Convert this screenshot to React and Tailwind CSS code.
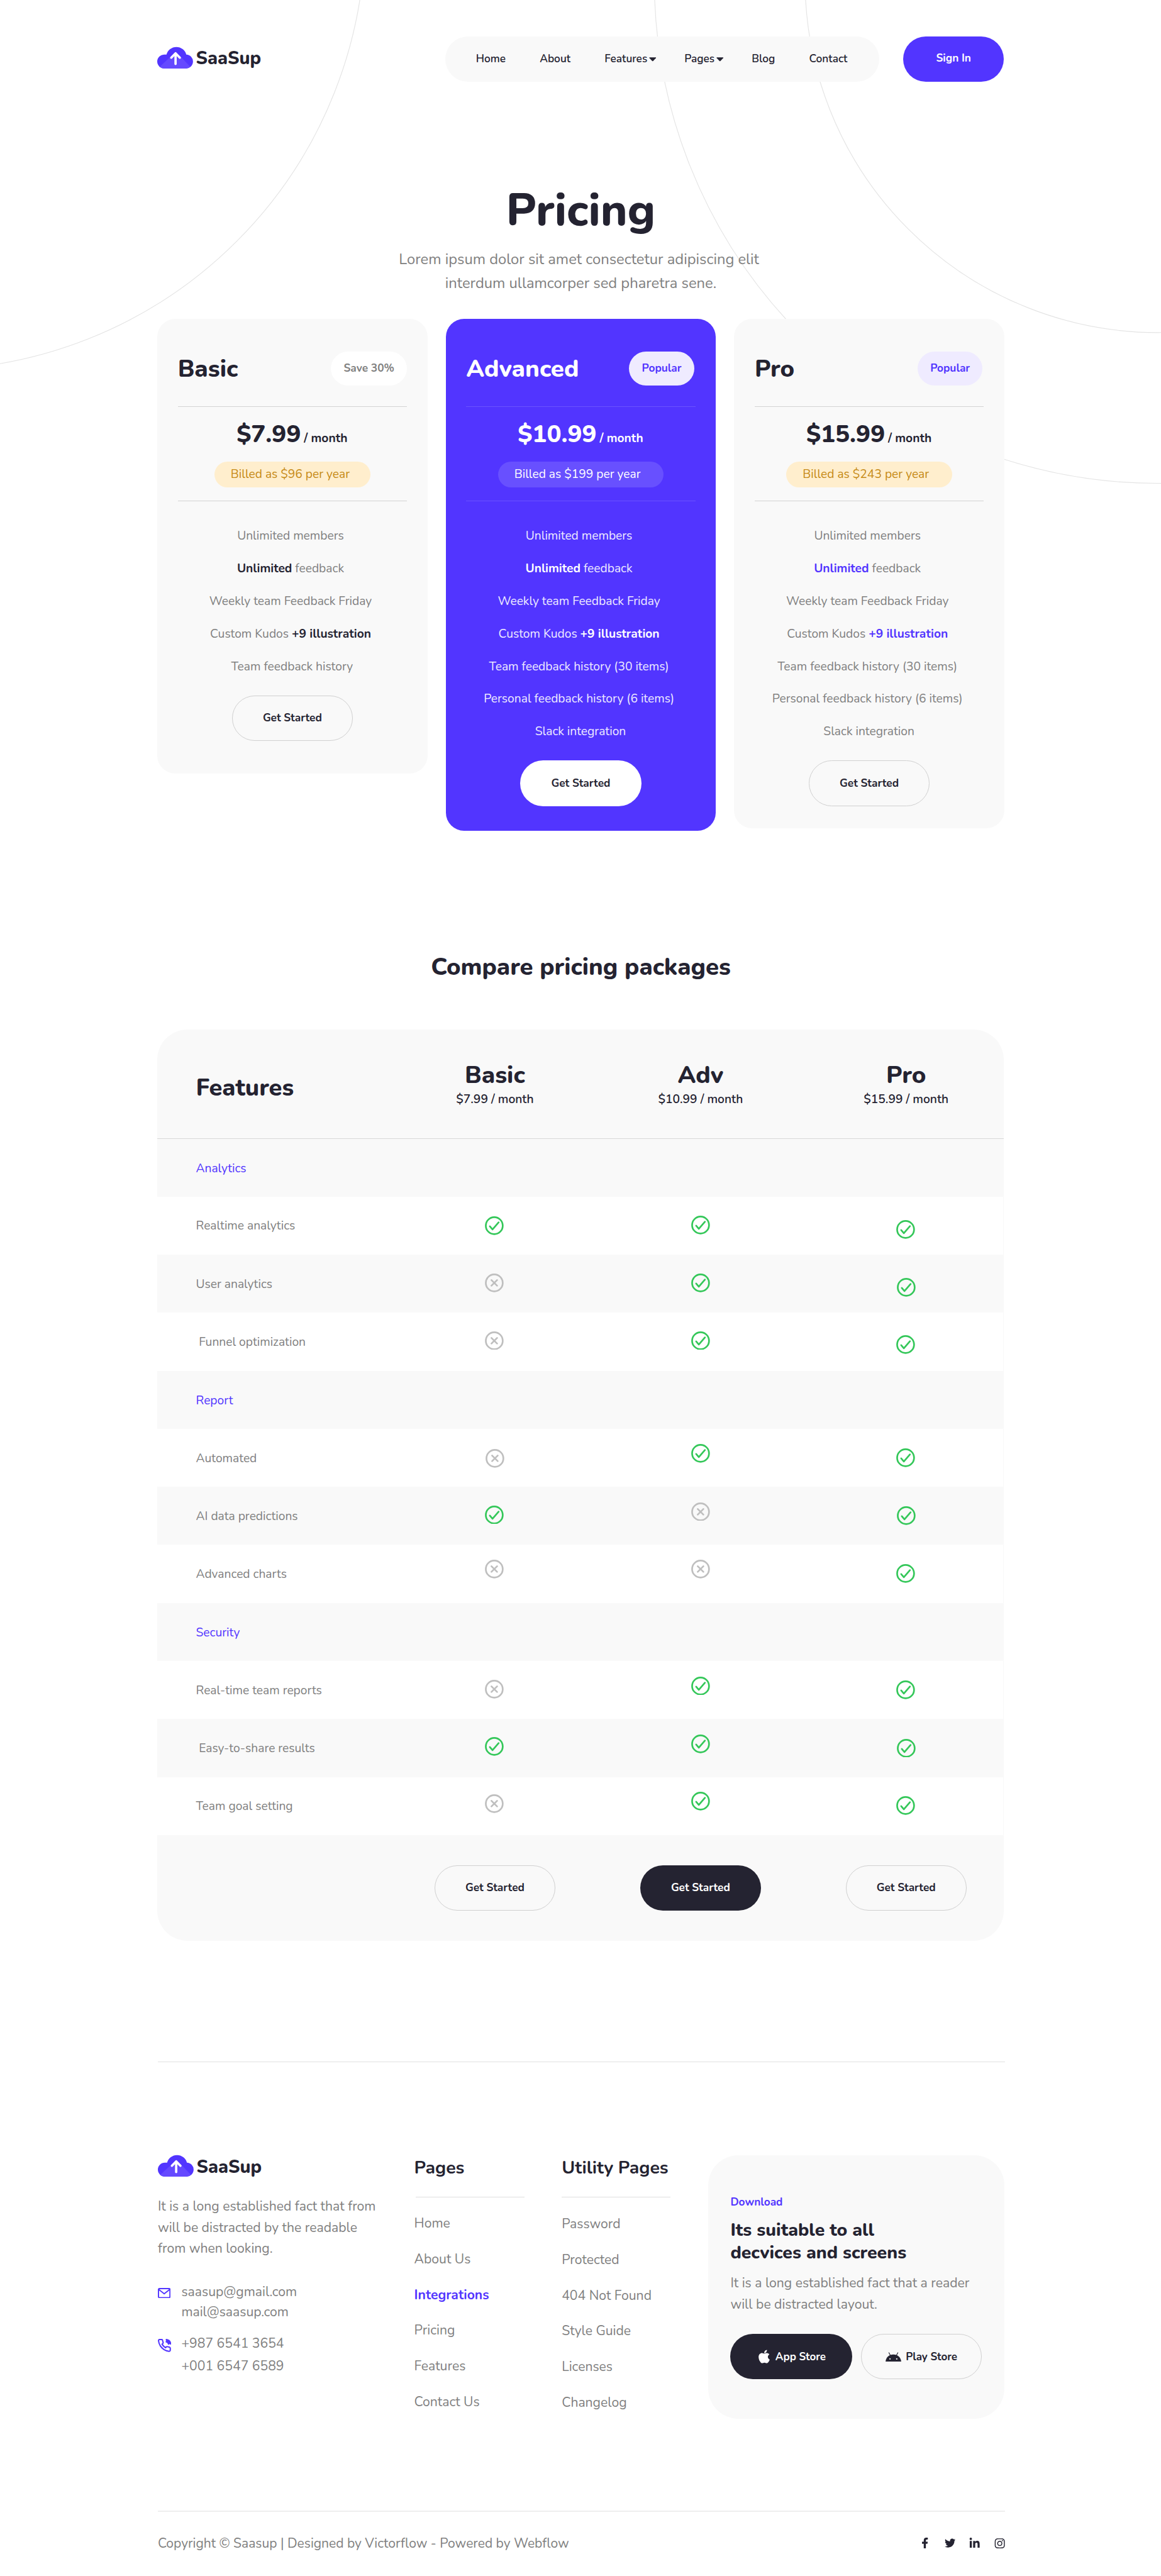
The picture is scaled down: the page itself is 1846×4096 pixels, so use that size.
import React from "react";
import { FaApple, FaFacebookF, FaInstagram, FaLinkedinIn, FaTwitter } from "react-icons/fa";

function Arcs() {
  return (
    <svg className="pointer-events-none absolute left-0 top-0" width="1920" height="810" viewBox="0 0 1920 810" fill="none" stroke="#e4e4e4" strokeWidth="1.2" aria-hidden="true">
      <circle cx="-121.6" cy="-114" r="725.6" />
      <circle cx="1915" cy="-33.7" r="583.7" />
      <circle cx="1915" cy="-33.7" r="833" />
    </svg>
  );
}

function Logo() {
  return (
    <div className="flex h-9 items-center gap-[5px]">
      <svg width="59" height="36.3" viewBox="0 0 59 36.3" fill="none">
        <path d="M11.5 36.3A11.5 11.5 0 0 1 11.5 13.3H15.3A17 17 0 0 1 48.1 13.3A11.5 11.5 0 0 1 47.2 36.3Z" fill="#5235ff" />
        <path d="M31 8.5L54.6 33.2Q51.6 36.3 47.2 36.3H11.5Q7 36.3 4 33.4Z" fill="#6549ff" />
        <path d="M30.3 28.8V11.4M23.2 18.4L30.3 11.2L37.4 18.4" stroke="#fff" strokeWidth="3.8" strokeLinecap="round" strokeLinejoin="round" />
      </svg>
      <span className="pt-[5px] text-[30px] leading-9 font-extrabold text-[#242331]">SaaSup</span>
    </div>
  );
}

function Caret() {
  return (
    <svg width="12" height="7" viewBox="0 0 12 7" fill="#242331">
      <path d="M1 .3H11Q12 .4 11.4 1.2L6.8 6.2Q6 7 5.2 6.2L.6 1.2Q0 .4 1 .3Z" />
    </svg>
  );
}

const navItems = [
  { label: "Home" },
  { label: "About" },
  { label: "Features", menu: true },
  { label: "Pages", menu: true },
  { label: "Blog" },
  { label: "Contact" },
];

function Header() {
  return (
    <header className="flex h-[135px] items-start pt-[60px]">
      <div className="w-[476px] pt-[17px]">
        <Logo />
      </div>
      <nav className="flex h-[75px] w-[718px] items-center gap-[56.4px] rounded-full bg-[#f9f9f9] pt-[2px] pl-[51px]">
        {navItems.map((item) => (
          <a key={item.label} className={item.menu ? "-mr-[10px] flex items-center gap-[3px] text-lg font-semibold" : "text-lg font-semibold"}>
            {item.label}
            {item.menu && <Caret />}
          </a>
        ))}
      </nav>
      <a className="ml-10 flex h-[75px] w-[166px] items-center justify-center rounded-full bg-[#5235ff] text-lg font-bold text-white">Sign In</a>
    </header>
  );
}

const plans = [
  {
    name: "Basic",
    badge: "Save 30%",
    price: "$7.99",
    billed: "Billed as $96 per year",
    card: "h-[752px] bg-[#f9f9f9]",
    badgeStyle: "bg-white text-[#808080]",
    rule: "border-[#d3d3d3]",
    pill: "w-[258px] bg-[#ffeecd] text-[#c68a15]",
    item: "text-[#808080]",
    strong: "text-[#242331]",
    button: "border border-[#d0d0d0]",
    tail: ["Team feedback history"],
  },
  {
    name: "Advanced",
    badge: "Popular",
    price: "$10.99",
    billed: "Billed as $199 per year",
    card: "h-[847px] bg-[#5235ff] text-white",
    badgeStyle: "mr-[2px] bg-[#efebff] text-[#5235ff]",
    rule: "border-[#6a52ff]",
    pill: "w-[274px] bg-[#6850ff] text-white",
    item: "text-white/90",
    strong: "text-white",
    button: "bg-white text-[#242331]",
    tail: ["Team feedback history (30 items)", "Personal feedback history (6 items)", "Slack integration"],
  },
  {
    name: "Pro",
    badge: "Popular",
    price: "$15.99",
    billed: "Billed as $243 per year",
    card: "h-[843px] bg-[#f9f9f9]",
    badgeStyle: "mr-[2px] bg-[#efebff] text-[#5235ff]",
    rule: "border-[#d3d3d3]",
    pill: "w-[274px] bg-[#ffeecd] text-[#c68a15]",
    item: "text-[#808080]",
    strong: "text-[#5235ff]",
    button: "border border-[#d0d0d0]",
    tail: ["Team feedback history (30 items)", "Personal feedback history (6 items)", "Slack integration"],
  },
];

function PlanCard({ plan }) {
  const tail = plan.tail;
  return (
    <article className={`flex w-[447px] flex-col items-center rounded-[30px] px-[34px] pt-[54px] ${plan.card}`}>
      <div className="mb-[34px] flex h-[57px] w-full items-center justify-between">
        <h2 className="pt-[2px] text-[40px] leading-none font-extrabold">{plan.name}</h2>
        <span className={`flex h-[57px] items-center rounded-full px-[21px] pt-px text-lg font-bold ${plan.badgeStyle}`}>{plan.badge}</span>
      </div>
      <div className={`flex h-[157px] w-full flex-col items-center border-y pt-[15px] ${plan.rule}`}>
        <p className="pr-px text-[40px] leading-[60px] font-extrabold">
          {plan.price}
          <span className="ml-[5px] text-xl leading-none font-bold">/ month</span>
        </p>
        <span className={`mt-[15px] flex h-[43px] items-center rounded-full pt-px pl-[27px] text-xl ${plan.pill}`}>{plan.billed}</span>
      </div>
      <ul className={`mt-[31px] text-center text-xl leading-[54px] ${plan.item}`}>
        <li className="pr-1.5">Unlimited members</li>
        <li className="pr-1.5"><strong className={plan.strong}>Unlimited</strong> feedback</li>
        <li className="pr-1.5">Weekly team Feedback Friday</li>
        <li className="pr-1.5">Custom Kudos <strong className={plan.strong}>+9 illustration</strong></li>
        {tail.map((t, i) => (
          <li key={t} className={i === tail.length - 1 ? "pr-px" : "pr-1.5"}>{t}</li>
        ))}
      </ul>
      <a className={`mt-[20px] flex h-[75px] w-[200px] items-center justify-center rounded-full pt-px text-lg font-bold ${plan.button}`}>Get Started</a>
    </article>
  );
}

function Mark({ on }) {
  return (
    <svg width="31" height="31" viewBox="-15.5 -15.5 31 31" fill="none" stroke={on ? "#34c759" : "#bfbfbf"} strokeWidth="2.8" strokeLinecap="round" strokeLinejoin="round">
      <circle r="14" />
      <path d={on ? "M-7.3 1L-2.9 6.2L7.2 -5.5" : "M-4.7 -4.7L4.7 4.7M4.7 -4.7L-4.7 4.7"} />
    </svg>
  );
}

// Vertical shift of a mark from the middle of its row, in pixels.
const nudge = {
  "-8": "pb-[16px]",
  "-7": "pb-[14px]",
  "-4": "pb-[8px]",
  "-3": "pb-[6px]",
  "-2": "pb-[4px]",
  "-1": "pb-[2px]",
  0: "",
  1: "pt-[2px] pl-[2px]",
  5: "pt-[10px]",
  6: "pt-[12px]",
};

const rows = [
  { group: "Analytics" },
  { label: "Realtime analytics", marks: [[1, 0], [1, -1], [1, 6]] },
  { label: "User analytics", marks: [[0, -1], [1, -1], [1, 6]] },
  { label: "Funnel optimization", wide: true, marks: [[0, -2], [1, -2], [1, 5]] },
  { group: "Report" },
  { label: "Automated", marks: [[0, 1], [1, -7], [1, 0]] },
  { label: "AI data predictions", marks: [[1, -2], [0, -7], [1, 0]] },
  { label: "Advanced charts", marks: [[0, -8], [0, -8], [1, -1]] },
  { group: "Security" },
  { label: "Real-time team reports", marks: [[0, -1], [1, -7], [1, 0]] },
  { label: "Easy-to-share results", wide: true, marks: [[1, -3], [1, -7], [1, 0]] },
  { label: "Team goal setting", marks: [[0, -4], [1, -8], [1, -1]] },
];

const cols = "grid grid-cols-[389px_340px_340px_1fr]";

function Compare() {
  return (
    <section className="w-[1400px]">
      <div className={`${cols} h-[181px] rounded-t-[50px] border-b border-[#d8d8d8] bg-[#f9f9f9]`}>
        <h3 className="flex items-center pt-[12px] pl-16 text-[39.5px] leading-none font-extrabold">Features</h3>
        {[["Basic", "$7.99 / month"], ["Adv", "$10.99 / month"], ["Pro", "$15.99 / month"]].map(([name, price], i) => (
          <div key={name} className={i === 2 ? "pt-[54px] pl-[8px] text-center" : "-ml-px pt-[54px] text-center"}>
            <h3 className="text-[40px] leading-[44px] font-extrabold">{name}</h3>
            <p className="mt-[5px] text-xl leading-[27px] font-semibold">{price}</p>
          </div>
        ))}
      </div>
      {rows.map((row, r) => (
        <div key={r} className={`${cols} items-center text-xl ${r === 0 ? "h-[95px]" : "h-24"} ${r % 2 ? "border-r border-[#f9f9f9] bg-white" : "bg-[#f9f9f9]"}`}>
          {row.group ? (
            <span className="pt-[3px] pl-16 text-[#5235ff]">{row.group}</span>
          ) : (
            <>
              <span className={row.wide ? "pt-[2px] pl-[69px] text-[#808080]" : "pt-[2px] pl-16 text-[#808080]"}>{row.label}</span>
              {row.marks.map(([on, dy], i) => (
                <span key={i} className={`flex justify-center ${i === 0 ? "-ml-[3px]" : i === 2 ? "ml-[8px]" : "-ml-px"} ${nudge[dy]}`}>
                  <Mark on={on === 1} />
                </span>
              ))}
            </>
          )}
        </div>
      ))}
      <div className={`${cols} h-[175px] rounded-b-[50px] bg-[#f9f9f9] pt-[50px]`}>
        <span />
        {["border border-[#d0d0d0]", "bg-[#242331] text-white", "border border-[#d0d0d0]"].map((b, i) => (
          <div key={i} className={i === 2 ? "flex justify-center pl-[8px]" : "-ml-px flex justify-center"}>
            <a className={`flex h-[75px] w-[200px] items-center justify-center rounded-full pt-px text-lg font-bold ${b}`}>Get Started</a>
          </div>
        ))}
      </div>
    </section>
  );
}

function MailIcon() {
  return (
    <svg className="mt-[11px] shrink-0" width="21" height="17" viewBox="0 0 21 17" fill="none" stroke="#5235ff" strokeWidth="2" strokeLinejoin="round">
      <rect x="1" y="1" width="19" height="15" rx="1.6" />
      <path d="M1.6 2.6L10.5 9.6L19.4 2.6" />
    </svg>
  );
}

function PhoneIcon() {
  return (
    <svg className="mt-[10px] shrink-0" width="22" height="22" viewBox="1 1 22.5 22.5" fill="none" stroke="#5235ff" strokeWidth="2.2" strokeLinecap="round" strokeLinejoin="round">
      <path d="M22 16.92v3a2 2 0 0 1-2.18 2 19.79 19.79 0 0 1-8.63-3.07 19.5 19.5 0 0 1-6-6 19.79 19.79 0 0 1-3.07-8.67A2 2 0 0 1 4.11 2h3a2 2 0 0 1 2 1.72 12.84 12.84 0 0 0 .7 2.81 2 2 0 0 1-.45 2.11L8.09 9.91a16 16 0 0 0 6 6l1.27-1.27a2 2 0 0 1 2.11-.45 12.84 12.84 0 0 0 2.81.7A2 2 0 0 1 22 16.92z" />
      <path d="M15.6 2.4C19.4 3 21.8 5.4 22.4 9.2M15.4 5.8C17.6 6.2 18.8 7.4 19.2 9.4M16 3.4L20.4 8.2" strokeWidth="2.8" />
    </svg>
  );
}

function AndroidIcon() {
  return (
    <svg width="26" height="16" viewBox="0 0 26 16" fill="none">
      <path d="M0 16C.7 8.6 6 4 13 4S25.3 8.6 26 16Z" fill="#242331" />
      <path d="M5.6 1L8.2 5.8M20.4 1L17.8 5.8" stroke="#242331" strokeWidth="1.2" strokeLinecap="round" />
      <circle cx="7.4" cy="11.3" r="1.2" fill="#f9f9f9" />
      <circle cx="18.6" cy="11.3" r="1.2" fill="#f9f9f9" />
    </svg>
  );
}

function LinkColumn({ title, links, active, width, ruleStyle, listStyle }) {
  return (
    <div className={width}>
      <h4 className="h-10 text-[29.6px] leading-[41px] font-bold">{title}</h4>
      <div className={`mt-[29px] h-px w-[180px] bg-[#dedede] ${ruleStyle}`} />
      <ul className={`text-[22px] leading-[59px] text-[#808080] ${listStyle}`}>
        {links.map((l) => (
          <li key={l} className={l === active ? "font-bold text-[#5235ff]" : ""}>{l}</li>
        ))}
      </ul>
    </div>
  );
}

function Footer() {
  return (
    <footer className="ml-px w-[1401px]">
      <div className="mt-[199px] h-px bg-[#e2e2e2]" />
      <div className="flex h-[742px] items-start pt-[154px]">
        <div className="w-[424px] text-[22px] text-[#808080]">
          <Logo />
          <p className="mt-[32px] w-[366px] leading-[35px]">It is a long established fact that from will be distracted by the readable from when looking.</p>
          <div className="mt-[36px] flex gap-[18px] leading-[33.5px]">
            <MailIcon />
            <p>saasup@gmail.com<br />mail@saasup.com</p>
          </div>
          <div className="mt-[18px] flex gap-[17px] leading-[37px]">
            <PhoneIcon />
            <p>+987 6541 3654<br />+001 6547 6589</p>
          </div>
        </div>
        <LinkColumn
          title="Pages"
          links={["Home", "About Us", "Integrations", "Pricing", "Features", "Contact Us"]}
          active="Integrations"
          width="w-[244px]"
          ruleStyle="ml-[2px]"
          listStyle="mt-[14px]"
        />
        <LinkColumn
          title="Utility Pages"
          links={["Password", "Protected", "404 Not Found", "Style Guide", "Licenses", "Changelog"]}
          width="w-[242px]"
          ruleStyle=""
          listStyle="mt-[15px]"
        />
        <div className="h-[436px] w-[490px] rounded-[50px] bg-[#f9f9f9] pt-[66px] pl-[37px]">
          <p className="text-lg leading-6 font-bold text-[#5235ff]">Download</p>
          <h4 className="mt-[15.5px] text-[29.6px] leading-[37px] font-extrabold">Its suitable to all<br />decvices and screens</h4>
          <p className="mt-[15.5px] w-[410px] text-[22px] leading-[35px] text-[#808080]">It is a long established fact that a reader will be distracted layout.</p>
          <div className="mt-[31px] flex gap-[15px] text-[17.7px] font-bold">
            <a className="flex h-[75px] w-[201px] items-center justify-center gap-[6px] rounded-full bg-[#242331] pt-px text-white">
              <FaApple size={25} className="-mt-0.5" />
              App Store
            </a>
            <a className="flex h-[75px] w-[200px] items-center justify-center gap-[7px] rounded-full border border-[#d0d0d0] pt-px">
              <AndroidIcon />
              Play Store
            </a>
          </div>
        </div>
      </div>
      <div className="h-[2px] bg-[#eeeeee]" />
      <div className="flex h-[106px] items-center justify-between">
        <p className="text-[21.9px] text-[#808080]">Copyright © Saasup | Designed by Victorflow - Powered by Webflow</p>
        <div className="flex items-center gap-[23px] pb-[2px]">
          <span className="flex w-[18px] justify-center"><FaFacebookF size={18} /></span>
          <span className="flex w-[18px] justify-center"><FaTwitter size={18} /></span>
          <span className="flex w-[18px] justify-center"><FaLinkedinIn size={19} /></span>
          <span className="flex w-[18px] justify-center"><FaInstagram size={19} /></span>
        </div>
      </div>
    </footer>
  );
}

export default function App() {
  return (
    <div className="relative h-[4260px] w-[1920px] overflow-hidden bg-white font-[Nunito,Lato,sans-serif] text-[#242331] [zoom:0.96146]">
      <Arcs />
      <div className="relative ml-[260px] w-[1401px]">
        <Header />
        <section className="h-[392px] pt-[168px] text-center">
          <h1 className="text-[75px] leading-[90px] font-extrabold">Pricing</h1>
          <p className="mt-[17px] text-[24.7px] leading-[39px] text-[#808080]">
            <span className="mr-[6px]">Lorem ipsum dolor sit amet consectetur adipiscing elit</span>
            <br />
            interdum ullamcorper sed pharetra sene.
          </p>
        </section>
        <section className="flex h-[847px] items-start justify-between">
          {plans.map((p) => (
            <PlanCard key={p.name} plan={p} />
          ))}
        </section>
        <h2 className="mt-[198px] mb-[75px] text-center text-[39.8px] leading-[56px] font-extrabold">Compare pricing packages</h2>
        <Compare />
        <Footer />
      </div>
    </div>
  );
}
